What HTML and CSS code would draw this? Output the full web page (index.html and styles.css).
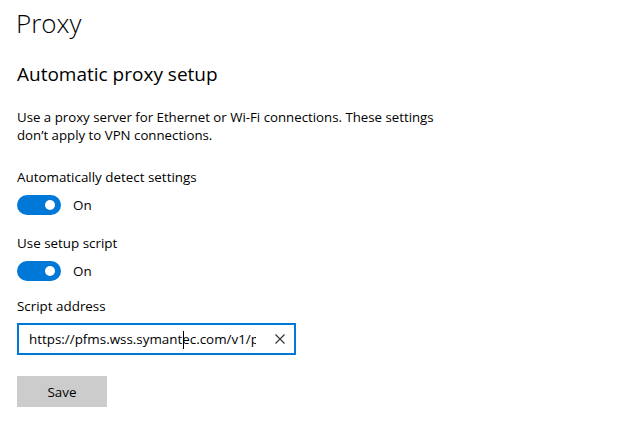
FILE: index.html
```html
<!DOCTYPE html>
<html>
<head>
<meta charset="utf-8">
<link rel="stylesheet" href="styles.css">
</head>
<body>
<div class="page">
  <h1 class="title">Proxy</h1>
  <h2 class="subtitle">Automatic proxy setup</h2>
  <p class="desc">Use a proxy server for Ethernet or Wi-Fi connections. These settings don’t apply to VPN connections.</p>
  <div class="label">Automatically detect settings</div>
  <div class="toggle-row">
    <span class="toggle"><span class="knob"></span></span>
    <span class="state">On</span>
  </div>
  <div class="label label-after">Use setup script</div>
  <div class="toggle-row">
    <span class="toggle"><span class="knob"></span></span>
    <span class="state">On</span>
  </div>
  <div class="label label-address">Script address</div>
  <div class="input">
    <span class="input-text">https://pfms.wss.symantec.com/v1/pa</span>
    <span class="caret"></span>
    <svg class="clear" width="12" height="12" viewBox="0 0 12 12"><path d="M1.5 1.5 L10.5 10.5 M10.5 1.5 L1.5 10.5" stroke="#333" stroke-width="1.1" fill="none"/></svg>
  </div>
  <button class="save">Save</button>
</div>
</body>
</html>
```
FILE: styles.css
```css
html, body {
  margin: 0;
  padding: 0;
  background: #ffffff;
}
.page {
  padding: 0 0 0 17px;
  font-family: "Open Sans", "Noto Sans", sans-serif;
  color: #000;
  display: flex;
  flex-direction: column;
  align-items: flex-start;
}
.title {
  font-size: 26px;
  font-weight: 300;
  margin: 4px 0 0 -1px;
  line-height: 38px;
}
.subtitle {
  font-size: 19px;
  font-weight: 400;
  margin: 18px 0 0 0;
  line-height: 28px;
}
.desc {
  font-size: 13.25px;
  line-height: 18px;
  margin: 20px 0 0 0;
  width: 440px;
}
.label {
  font-size: 13.4px;
  line-height: 20px;
  margin-top: 23px;
}
.label-after {
  margin-top: 18px;
}
.label-address {
  margin-top: 15px;
}
.toggle-row {
  display: flex;
  align-items: center;
  margin-top: 8px;
  height: 20px;
}
.toggle {
  width: 44px;
  height: 20px;
  border-radius: 10px;
  background: #0078d7;
  position: relative;
  display: block;
}
.knob {
  position: absolute;
  right: 6px;
  top: 5px;
  width: 10px;
  height: 10px;
  border-radius: 50%;
  background: #fff;
}
.state {
  font-size: 13.4px;
  margin-left: 12px;
}
.input {
  margin-top: 7px;
  box-sizing: border-box;
  width: 279px;
  height: 32px;
  border: 2px solid #0078d7;
  display: flex;
  align-items: center;
  padding: 0 8px 0 10px;
  position: relative;
}
.input-text {
  font-size: 13.4px;
  flex: 1;
  overflow: hidden;
  white-space: nowrap;
  width: 232px;
  max-width: 232px;
}
.caret {
  position: absolute;
  left: 164px;
  top: 6px;
  width: 1px;
  height: 18px;
  background: #000;
}
.clear {
  margin-left: 18px;
}
.save {
  margin-top: 21px;
  width: 90px;
  height: 31px;
  border: none;
  background: #cccccc;
  font-family: "Open Sans", "Noto Sans", sans-serif;
  font-size: 13.4px;
  color: #000;
  padding: 0;
}
```
